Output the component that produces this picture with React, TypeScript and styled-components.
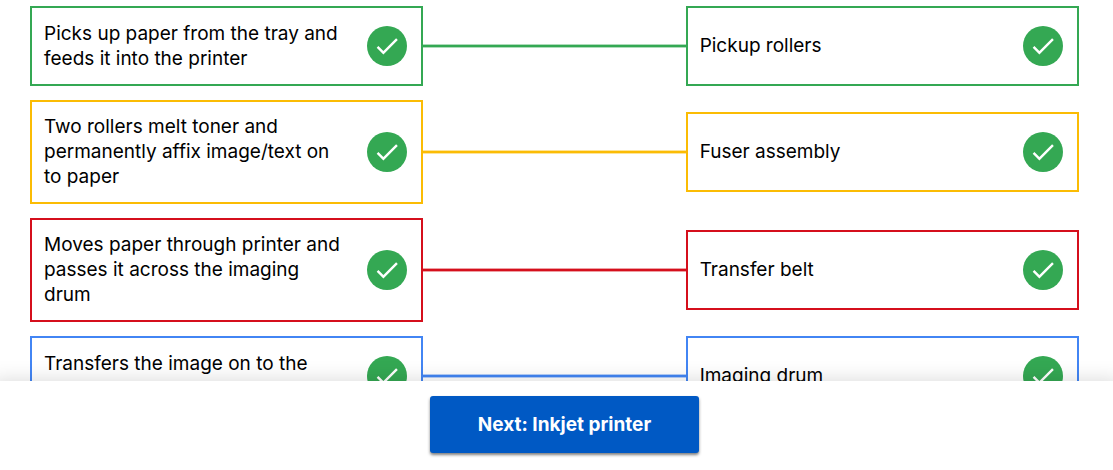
import React from "react";
import styled, { createGlobalStyle } from "styled-components";

const GlobalStyle = createGlobalStyle`
  * { box-sizing: border-box; }
  body {
    margin: 0;
    background: #fff;
    color: #000;
    font-family: "Google Sans", Inter, sans-serif;
  }
`;

const Page = styled.div`
  display: flex;
  flex-direction: column;
  height: 100vh;
`;

const Pairs = styled.main`
  flex: 1;
  min-height: 0;
  overflow-y: auto;
  scrollbar-width: none;
  display: flex;
  flex-direction: column;
  gap: 14px;
  padding: 6px 34px 14px 30px;
`;

const Pair = styled.div`
  flex: none;
  display: grid;
  grid-template-columns: 3fr 2fr 3fr;
  align-items: center;
`;

const Card = styled.div<{ $color: string }>`
  display: flex;
  align-items: center;
  justify-content: space-between;
  gap: 20px;
  min-height: 80px;
  padding: 12px 14px 13px 12px;
  border: 2px solid ${(p) => p.$color};
`;

const Label = styled.span`
  font-size: 19px;
  font-weight: 400;
  line-height: 25px;
`;

const Description = styled(Label)`
  display: block;
  min-height: 50px;
`;

const Connector = styled.div<{ $color: string }>`
  height: 4px;
  background: linear-gradient(${(p) => `${p.$color}66 1px, ${p.$color} 1px, ${p.$color} 3px, ${p.$color}66 3px`});
`;

const CheckIcon = styled.svg`
  flex: none;
  width: 40px;
  height: 40px;
`;

const Footer = styled.footer`
  position: relative;
  z-index: 1;
  flex: none;
  display: flex;
  justify-content: center;
  padding: 15px 0 17px 16px;
  background: #fff;
  box-shadow: 0 8px 20px 8px rgba(0, 0, 0, 0.16);
`;

const NextButton = styled.button`
  height: 57px;
  padding: 0 48px;
  border: 0;
  border-radius: 3px;
  background: #0059c4;
  color: #fff;
  font: 700 19px/25px "Google Sans", Inter, sans-serif;
  box-shadow: 0 2px 3px rgba(0, 0, 0, 0.5);
  cursor: pointer;
`;

function Check() {
  return (
    <CheckIcon viewBox="0 0 40 40" role="img" aria-label="Correct">
      <circle cx="20" cy="20" r="20" fill="#34a853" />
      <path
        transform="translate(5.6 5.6) scale(1.2)"
        fill="#fff"
        d="M9 16.17 4.83 12l-1.42 1.41L9 19 21 7l-1.41-1.41z"
      />
    </CheckIcon>
  );
}

const pairs = [
  { color: "#34a853", text: "Picks up paper from the tray and feeds it into the printer", answer: "Pickup rollers" },
  { color: "#fbbc04", text: "Two rollers melt toner and permanently affix image/text on to paper", answer: "Fuser assembly" },
  { color: "#d50f1c", text: "Moves paper through printer and passes it across the imaging drum", answer: "Transfer belt" },
  { color: "#4285f4", text: "Transfers the image on to the", answer: "Imaging drum" },
];

export default function App() {
  return (
    <Page>
      <GlobalStyle />
      <Pairs>
        {pairs.map((p) => (
          <Pair key={p.answer}>
            <Card $color={p.color}>
              <Description>{p.text}</Description>
              <Check />
            </Card>
            <Connector $color={p.color} />
            <Card $color={p.color}>
              <Label>{p.answer}</Label>
              <Check />
            </Card>
          </Pair>
        ))}
      </Pairs>
      <Footer>
        <NextButton type="button">Next: Inkjet printer</NextButton>
      </Footer>
    </Page>
  );
}
